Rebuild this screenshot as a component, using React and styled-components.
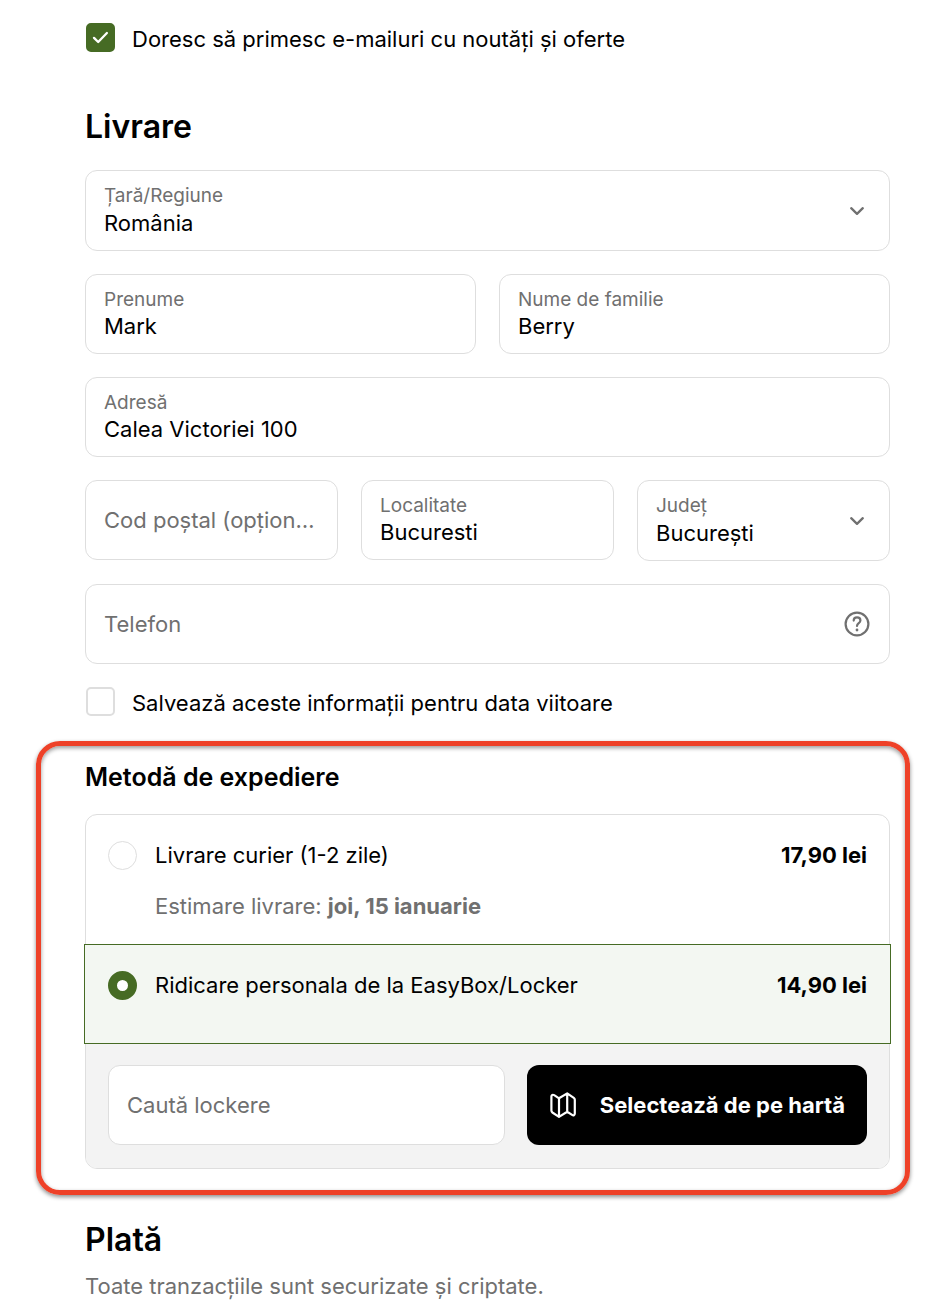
import styled, { createGlobalStyle, css, ThemeProvider } from 'styled-components';

const theme = {
  text: '#000',
  gray: '#707070',
  line: '#dedede',
  green: '#466b24',
  greenLight: '#f3f7f2',
  panel: '#f3f3f3',
  red: '#ee4128',
  radius: '12px',
};

const GlobalStyle = createGlobalStyle`
  * {
    box-sizing: border-box;
  }

  body {
    margin: 0;
    background: #fff;
    color: ${theme.text};
    font-family: Inter, 'Liberation Sans', sans-serif;
    font-size: 22px;
    line-height: 28px;
  }

  input, select, button {
    font: inherit;
    color: inherit;
  }

  h2, h3, p {
    margin: 0;
  }
`;

const Page = styled.main`
  padding: 23px 20px 12px 36px;
`;

const Section = styled.section`
  padding: 0 20px 0 49px;
`;

const Title = styled.h2`
  font-size: 32px;
  line-height: 40px;
  font-weight: 600;
`;

const SubTitle = styled.h3`
  font-size: 25px;
  line-height: 32px;
  font-weight: 600;
`;

const Note = styled.p`
  margin-top: 12px;
  color: ${({ theme }) => theme.gray};
`;

const CheckLabel = styled.label`
  display: flex;
  align-items: flex-start;
  gap: 17px;
  height: 29px;
  padding-left: 1px;
  line-height: 32px;
`;

const CheckMark = styled.span`
  display: grid;
  flex: none;
  width: 29px;
  height: 29px;

  > * {
    grid-area: 1 / 1;
  }

  svg {
    place-self: center;
    pointer-events: none;
  }
`;

const Checkbox = styled.input.attrs({ type: 'checkbox' })`
  appearance: none;
  width: 29px;
  height: 29px;
  margin: 0;
  border: 2px solid ${({ theme }) => theme.line};
  border-radius: 5px;
  background: #fff;

  &:checked {
    border-color: ${({ theme }) => theme.green};
    background: ${({ theme }) => theme.green};
  }
`;

const Radio = styled.input.attrs({ type: 'radio' })`
  appearance: none;
  flex: none;
  width: 29px;
  height: 29px;
  margin: 0;
  border: 1px solid ${({ theme }) => theme.line};
  border-radius: 50%;
  background: #fff;

  &:checked {
    border: 9px solid ${({ theme }) => theme.green};
  }
`;

const Form = styled.div`
  display: grid;
  gap: 23px;
  margin: 23px 0;
`;

const Row = styled.div`
  display: grid;
  grid-template-columns: repeat(${({ $cols }) => $cols}, minmax(0, 1fr));
  align-items: start;
  gap: 23px;
`;

const FieldBox = styled.div`
  display: flex;
  align-items: center;
  min-width: 0;
  min-height: 80px;
  padding: 13px 19px 13px 18px;
  border: 1px solid ${({ theme }) => theme.line};
  border-radius: ${({ theme }) => theme.radius};
  background: #fff;

  svg {
    flex: none;
    color: ${({ theme }) => theme.gray};
  }
`;

const FieldBody = styled.div`
  display: flex;
  flex: 1;
  flex-direction: column;
  min-width: 0;
`;

const FieldLabel = styled.label`
  font-size: 19px;
  line-height: 24px;
  color: ${({ theme }) => theme.gray};
`;

const control = css`
  display: block;
  width: 100%;
  margin: 0;
  padding: 0;
  border: 0;
  outline: 0;
  background: transparent;
`;

const TextInput = styled.input`
  ${control}
  height: 28px;
  text-overflow: ellipsis;

  &::placeholder {
    color: ${({ theme }) => theme.gray};
    opacity: 1;
  }
`;

const Select = styled.select`
  ${control}
  appearance: none;
  height: 29px;
`;

const Highlight = styled.section`
  margin-top: 25px;
  margin-bottom: 25px;
  padding: 15px 15px 21px 44px;
  border: 5px solid ${({ theme }) => theme.red};
  border-radius: 24px;
  box-shadow: 0 2px 4px rgba(0, 0, 0, 0.45), inset 0 2px 4px rgba(0, 0, 0, 0.4);
`;

const Methods = styled.div`
  margin-top: 21px;
  border: 1px solid ${({ theme }) => theme.line};
  border-radius: ${({ theme }) => theme.radius};
`;

const Method = styled.label`
  display: flex;
  align-items: flex-start;
  gap: 18px;
  padding: 26px 22px 24px;

  ${({ $selected, theme }) =>
    $selected &&
    css`
      margin: 0 -2px;
      padding: 26px 23px 43px;
      border: 1px solid ${theme.green};
      background: ${theme.greenLight};
    `}
`;

const MethodText = styled.span`
  flex: 1;
`;

const Estimate = styled.span`
  display: block;
  margin-top: 23px;
  color: ${({ theme }) => theme.gray};
`;

const Price = styled.strong`
  font-weight: 700;
`;

const LockerPanel = styled.div`
  display: flex;
  align-items: flex-start;
  gap: 22px;
  padding: 21px 22px 23px;
  border-radius: 0 0 11px 11px;
  background: ${({ theme }) => theme.panel};

  ${FieldBox} {
    flex: 1;
  }
`;

const MapButton = styled.button`
  display: flex;
  align-items: center;
  gap: 23px;
  height: 80px;
  padding: 0 22px;
  border: 0;
  border-radius: ${({ theme }) => theme.radius};
  background: #000;
  color: #fff;
  font-weight: 700;
`;

const CheckIcon = () => (
  <svg width="17" height="13" viewBox="0 0 17 13" fill="none" aria-hidden="true">
    <path d="M2 6.9 6.2 11 14.9 2" stroke="#fff" strokeWidth="2.3" strokeLinecap="round" strokeLinejoin="round" />
  </svg>
);

const ChevronIcon = () => (
  <svg width="26" height="26" viewBox="0 0 26 26" fill="none" aria-hidden="true">
    <path d="M7.2 10.2 13 15.8l5.8-5.6" stroke="currentColor" strokeWidth="2.3" strokeLinecap="round" strokeLinejoin="round" />
  </svg>
);

const HelpIcon = () => (
  <svg width="26" height="26" viewBox="0 0 26 26" fill="none" aria-hidden="true">
    <circle cx="13" cy="13" r="11.4" stroke="currentColor" strokeWidth="2.2" />
    <path
      d="M9.7 9.6C9.7 7.7 11.1 6.4 13 6.4s3.4 1.3 3.4 3.1c0 2.8-3.4 2.6-3.4 5.5"
      stroke="currentColor"
      strokeWidth="2.2"
      strokeLinecap="round"
    />
    <circle cx="13" cy="19" r="1.4" fill="currentColor" />
  </svg>
);

const MapIcon = () => (
  <svg width="28" height="28" viewBox="0 0 28 28" fill="none" aria-hidden="true">
    <path
      d="M10 7.3 5.2 4.1C3.7 3.3 2.4 4 2.4 5.4v14.2c0 .8.3 1.4 1 1.9l6.6 4.4 8.2-5.1 4.9 3.1c1.4.9 2.7.2 2.7-1.3V8.7c0-.8-.3-1.4-1-1.9l-6.6-4.4L10 7.3Zm0 0v18.6M18.2 2.4v18.4"
      stroke="currentColor"
      strokeWidth="2.2"
      strokeLinejoin="round"
    />
  </svg>
);

const Field = ({ id, label, value, placeholder, icon }) => (
  <FieldBox>
    <FieldBody>
      {label && <FieldLabel htmlFor={id}>{label}</FieldLabel>}
      <TextInput id={id} defaultValue={value} placeholder={placeholder} aria-label={label ? undefined : placeholder} />
    </FieldBody>
    {icon}
  </FieldBox>
);

const SelectField = ({ id, label, value }) => (
  <FieldBox>
    <FieldBody>
      <FieldLabel htmlFor={id}>{label}</FieldLabel>
      <Select id={id} defaultValue={value}>
        <option>{value}</option>
      </Select>
    </FieldBody>
    <ChevronIcon />
  </FieldBox>
);

const Check = ({ children, checked }) => (
  <CheckLabel>
    <CheckMark>
      <Checkbox defaultChecked={checked} />
      {checked && <CheckIcon />}
    </CheckMark>
    {children}
  </CheckLabel>
);

const DeliveryTitle = styled(Title)`
  margin-top: 55px;
`;

const App = () => {
  return (
    <ThemeProvider theme={theme}>
      <GlobalStyle />
      <Page>
        <Section>
          <Check checked>Doresc să primesc e-mailuri cu noutăți și oferte</Check>
          <DeliveryTitle>Livrare</DeliveryTitle>
          <Form>
            <SelectField id="country" label="Țară/Regiune" value="România" />
            <Row $cols={2}>
              <Field id="firstName" label="Prenume" value="Mark" />
              <Field id="lastName" label="Nume de familie" value="Berry" />
            </Row>
            <Field id="address" label="Adresă" value="Calea Victoriei 100" />
            <Row $cols={3}>
              <Field id="zip" placeholder="Cod poștal (opțional)" />
              <Field id="city" label="Localitate" value="Bucuresti" />
              <SelectField id="county" label="Județ" value="București" />
            </Row>
            <Field id="phone" placeholder="Telefon" icon={<HelpIcon />} />
          </Form>
          <Check>Salvează aceste informații pentru data viitoare</Check>
        </Section>

        <Highlight>
          <SubTitle>Metodă de expediere</SubTitle>
          <Methods>
            <Method>
              <Radio name="method" />
              <MethodText>
                Livrare curier (1-2 zile)
                <Estimate>
                  Estimare livrare: <strong>joi, 15 ianuarie</strong>
                </Estimate>
              </MethodText>
              <Price>17,90 lei</Price>
            </Method>
            <Method $selected>
              <Radio name="method" defaultChecked />
              <MethodText>Ridicare personala de la EasyBox/Locker</MethodText>
              <Price>14,90 lei</Price>
            </Method>
            <LockerPanel>
              <Field id="locker" placeholder="Caută lockere" />
              <MapButton type="button">
                <MapIcon />
                Selectează de pe hartă
              </MapButton>
            </LockerPanel>
          </Methods>
        </Highlight>

        <Section>
          <Title>Plată</Title>
          <Note>Toate tranzacțiile sunt securizate și criptate.</Note>
        </Section>
      </Page>
    </ThemeProvider>
  );
};

export default App;
